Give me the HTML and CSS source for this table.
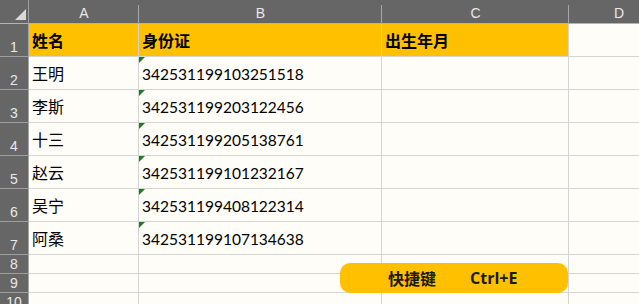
FILE: index.html
```html
<!DOCTYPE html>
<html lang="zh">
<head>
<meta charset="utf-8">
<link rel="stylesheet" href="styles.css">
</head>
<body>
<div class="sheet">
  <div class="grid">
    <div class="corner"><span class="corner-tri"></span></div>
    <div class="colhead">A</div>
    <div class="colhead">B</div>
    <div class="colhead">C</div>
    <div class="colhead last">D</div>

    <div class="rowhead">1</div>
    <div class="cell hl bold">姓名</div>
    <div class="cell hl bold">身份证</div>
    <div class="cell hl bold">出生年月</div>
    <div class="cell"></div>

    <div class="rowhead">2</div>
    <div class="cell">王明</div>
    <div class="cell num flag">342531199103251518</div>
    <div class="cell"></div>
    <div class="cell"></div>

    <div class="rowhead">3</div>
    <div class="cell">李斯</div>
    <div class="cell num flag">342531199203122456</div>
    <div class="cell"></div>
    <div class="cell"></div>

    <div class="rowhead">4</div>
    <div class="cell">十三</div>
    <div class="cell num flag">342531199205138761</div>
    <div class="cell"></div>
    <div class="cell"></div>

    <div class="rowhead">5</div>
    <div class="cell">赵云</div>
    <div class="cell num flag">342531199101232167</div>
    <div class="cell"></div>
    <div class="cell"></div>

    <div class="rowhead">6</div>
    <div class="cell">吴宁</div>
    <div class="cell num flag">342531199408122314</div>
    <div class="cell"></div>
    <div class="cell"></div>

    <div class="rowhead">7</div>
    <div class="cell">阿桑</div>
    <div class="cell num flag">342531199107134638</div>
    <div class="cell"></div>
    <div class="cell"></div>

    <div class="rowhead short">8</div>
    <div class="cell"></div>
    <div class="cell"></div>
    <div class="cell"></div>
    <div class="cell"></div>

    <div class="rowhead short">9</div>
    <div class="cell"></div>
    <div class="cell"></div>
    <div class="cell"></div>
    <div class="cell"></div>

    <div class="rowhead short">10</div>
    <div class="cell"></div>
    <div class="cell"></div>
    <div class="cell"></div>
    <div class="cell"></div>
  </div>
  <div class="shortcut"><span class="sc-label">快捷键</span><span class="sc-key">Ctrl+E</span></div>
</div>
</body>
</html>
```
FILE: styles.css
```css
html, body {
  margin: 0;
  padding: 0;
  background: #fffdf8;
  overflow: hidden;
}
.sheet {
  position: relative;
  width: 639px;
  height: 304px;
  overflow: hidden;
  font-family: "Lato", "Noto Sans CJK SC", sans-serif;
}
.grid {
  display: grid;
  grid-template-columns: 29px 110px 243px 187px 100px;
  grid-template-rows: 24px 33px 33px 33px 33px 33px 33px 33px 19px 19px 19px;
}
.corner {
  background: #666666;
  border-right: 1px solid #9e9e9e;
  border-bottom: 1px solid #b4b4b4;
  position: relative;
  box-sizing: border-box;
}
.corner-tri {
  position: absolute;
  left: 15px;
  top: 9px;
  width: 0;
  height: 0;
  border-left: 11px solid transparent;
  border-bottom: 11px solid #d9d9d9;
}
.colhead {
  background: #666666;
  color: #e9e9e9;
  font-family: "Liberation Sans", sans-serif;
  font-size: 14px;
  box-sizing: border-box;
  border-bottom: 1px solid #b4b4b4;
  display: flex;
  align-items: flex-end;
  justify-content: center;
  padding-bottom: 2px;
  background-image: linear-gradient(#666666, #666666), linear-gradient(#a6a6a6, #a6a6a6);
  background-size: calc(100% - 1px) 100%, 1px 100%;
  background-position: 0 0, right 5px;
  background-repeat: no-repeat;
}
.colhead.last {
  background-image: none;
}
.rowhead {
  background: #666666;
  color: #e9e9e9;
  font-family: "Liberation Sans", sans-serif;
  font-size: 14px;
  box-sizing: border-box;
  border-right: 1px solid #a6a6a6;
  border-bottom: 1px solid #9e9e9e;
  display: flex;
  align-items: flex-end;
  justify-content: center;
  padding-bottom: 1px;
  line-height: 16px;
}
.cell {
  box-sizing: border-box;
  border-right: 1px solid #d4d4d4;
  border-bottom: 1px solid #d4d4d4;
  font-size: 16px;
  color: #000;
  display: flex;
  align-items: center;
  padding-left: 3px;
  white-space: nowrap;
  position: relative;
  font-family: "Noto Sans CJK SC", sans-serif;
}
.cell.num {
  font-family: "Lato", sans-serif;
  font-size: 15.5px;
  padding-left: 3px;
  padding-top: 2px;
}
.cell.hl {
  background: #ffc000;
}
.cell.bold {
  font-weight: bold;
}
.cell.flag::before {
  content: "";
  position: absolute;
  left: 0;
  top: 0;
  width: 0;
  height: 0;
  border-top: 6px solid #1b7d1b;
  border-right: 6px solid transparent;
}
.shortcut {
  position: absolute;
  left: 340px;
  top: 263px;
  width: 228px;
  height: 30px;
  border-radius: 10px;
  background: #ffc000;
  display: flex;
  align-items: center;
  font-weight: bold;
  font-size: 16px;
  color: #1a1a1a;
}
.sc-label {
  font-family: "Noto Sans CJK SC", sans-serif;
  margin-left: 48px;
}
.sc-key {
  font-family: "Open Sans", sans-serif;
  margin-left: 34px;
}
```
